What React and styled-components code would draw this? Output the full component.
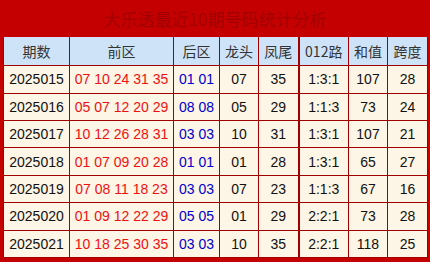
import React from "react";
import styled, { createGlobalStyle } from "styled-components";

const Global = createGlobalStyle`
  html, body { margin: 0; padding: 0; background: #ffffff; }
  body { font-family: "Liberation Sans", Arial, "Noto Sans CJK SC", sans-serif; }
`;

const Frame = styled.div`
  width: 430px;
  height: 262px;
  box-sizing: border-box;
  background: #c40000;
  padding: 0 3px 4px 3px;
  display: flex;
  flex-direction: column;
`;

const Title = styled.div`
  height: 38px;
  display: flex;
  align-items: center;
  justify-content: center;
  font-family: "Noto Sans CJK SC", sans-serif;
  font-size: 17px;
  color: #a30000;
`;

const Table = styled.table`
  border-collapse: collapse;
  table-layout: fixed;
  width: 424px;
  background: #fdf5e6;
`;

const HeadCell = styled.th`
  height: 28px;
  padding: 0;
  font-weight: normal;
  font-family: "Noto Sans CJK SC", sans-serif;
  font-size: 14px;
  color: #333333;
  background: #cfe3f8;
  border: 1px solid #a00000;
  border-top: none;
  text-align: center;
  ${(p) => (p.$thick ? "border-left: 2px solid #a00000;" : "")}
`;

const Cell = styled.td`
  height: 26.4px;
  padding: 0;
  font-size: 14px;
  font-family: "Liberation Sans", Arial, sans-serif;
  color: ${(p) => (p.$tone === "red" ? "#ee1111" : p.$tone === "blue" ? "#0000cc" : "#111111")};
  border: 1px solid #a00000;
  text-align: center;
  white-space: nowrap;
  ${(p) => (p.$thick ? "border-left: 2px solid #a00000;" : "")}
`;

const cols = [66, 104, 46, 39, 40, 50, 39, 40];
const heads = ["期数", "前区", "后区", "龙头", "凤尾", "012路", "和值", "跨度"];

const rows = [
  ["2025015", "07 10 24 31 35", "01 01", "07", "35", "1:3:1", "107", "28"],
  ["2025016", "05 07 12 20 29", "08 08", "05", "29", "1:1:3", "73", "24"],
  ["2025017", "10 12 26 28 31", "03 03", "10", "31", "1:3:1", "107", "21"],
  ["2025018", "01 07 09 20 28", "01 01", "01", "28", "1:3:1", "65", "27"],
  ["2025019", "07 08 11 18 23", "03 03", "07", "23", "1:1:3", "67", "16"],
  ["2025020", "01 09 12 22 29", "05 05", "01", "29", "2:2:1", "73", "28"],
  ["2025021", "10 18 25 30 35", "03 03", "10", "35", "2:2:1", "118", "25"],
];

const tones = [null, "red", "blue", null, null, null, null, null];

export default function App() {
  return (
    <>
      <Global />
      <Frame>
        <Title>大乐透最近10期号码统计分析</Title>
        <Table>
          <colgroup>
            {cols.map((w, i) => (
              <col key={i} style={{ width: w }} />
            ))}
          </colgroup>
          <thead>
            <tr>
              {heads.map((h, i) => (
                <HeadCell key={h} $thick={i === 5}>
                  {h}
                </HeadCell>
              ))}
            </tr>
          </thead>
          <tbody>
            {rows.map((r) => (
              <tr key={r[0]}>
                {r.map((v, i) => (
                  <Cell key={i} $tone={tones[i]} $thick={i === 5}>
                    {v}
                  </Cell>
                ))}
              </tr>
            ))}
          </tbody>
        </Table>
      </Frame>
    </>
  );
}
